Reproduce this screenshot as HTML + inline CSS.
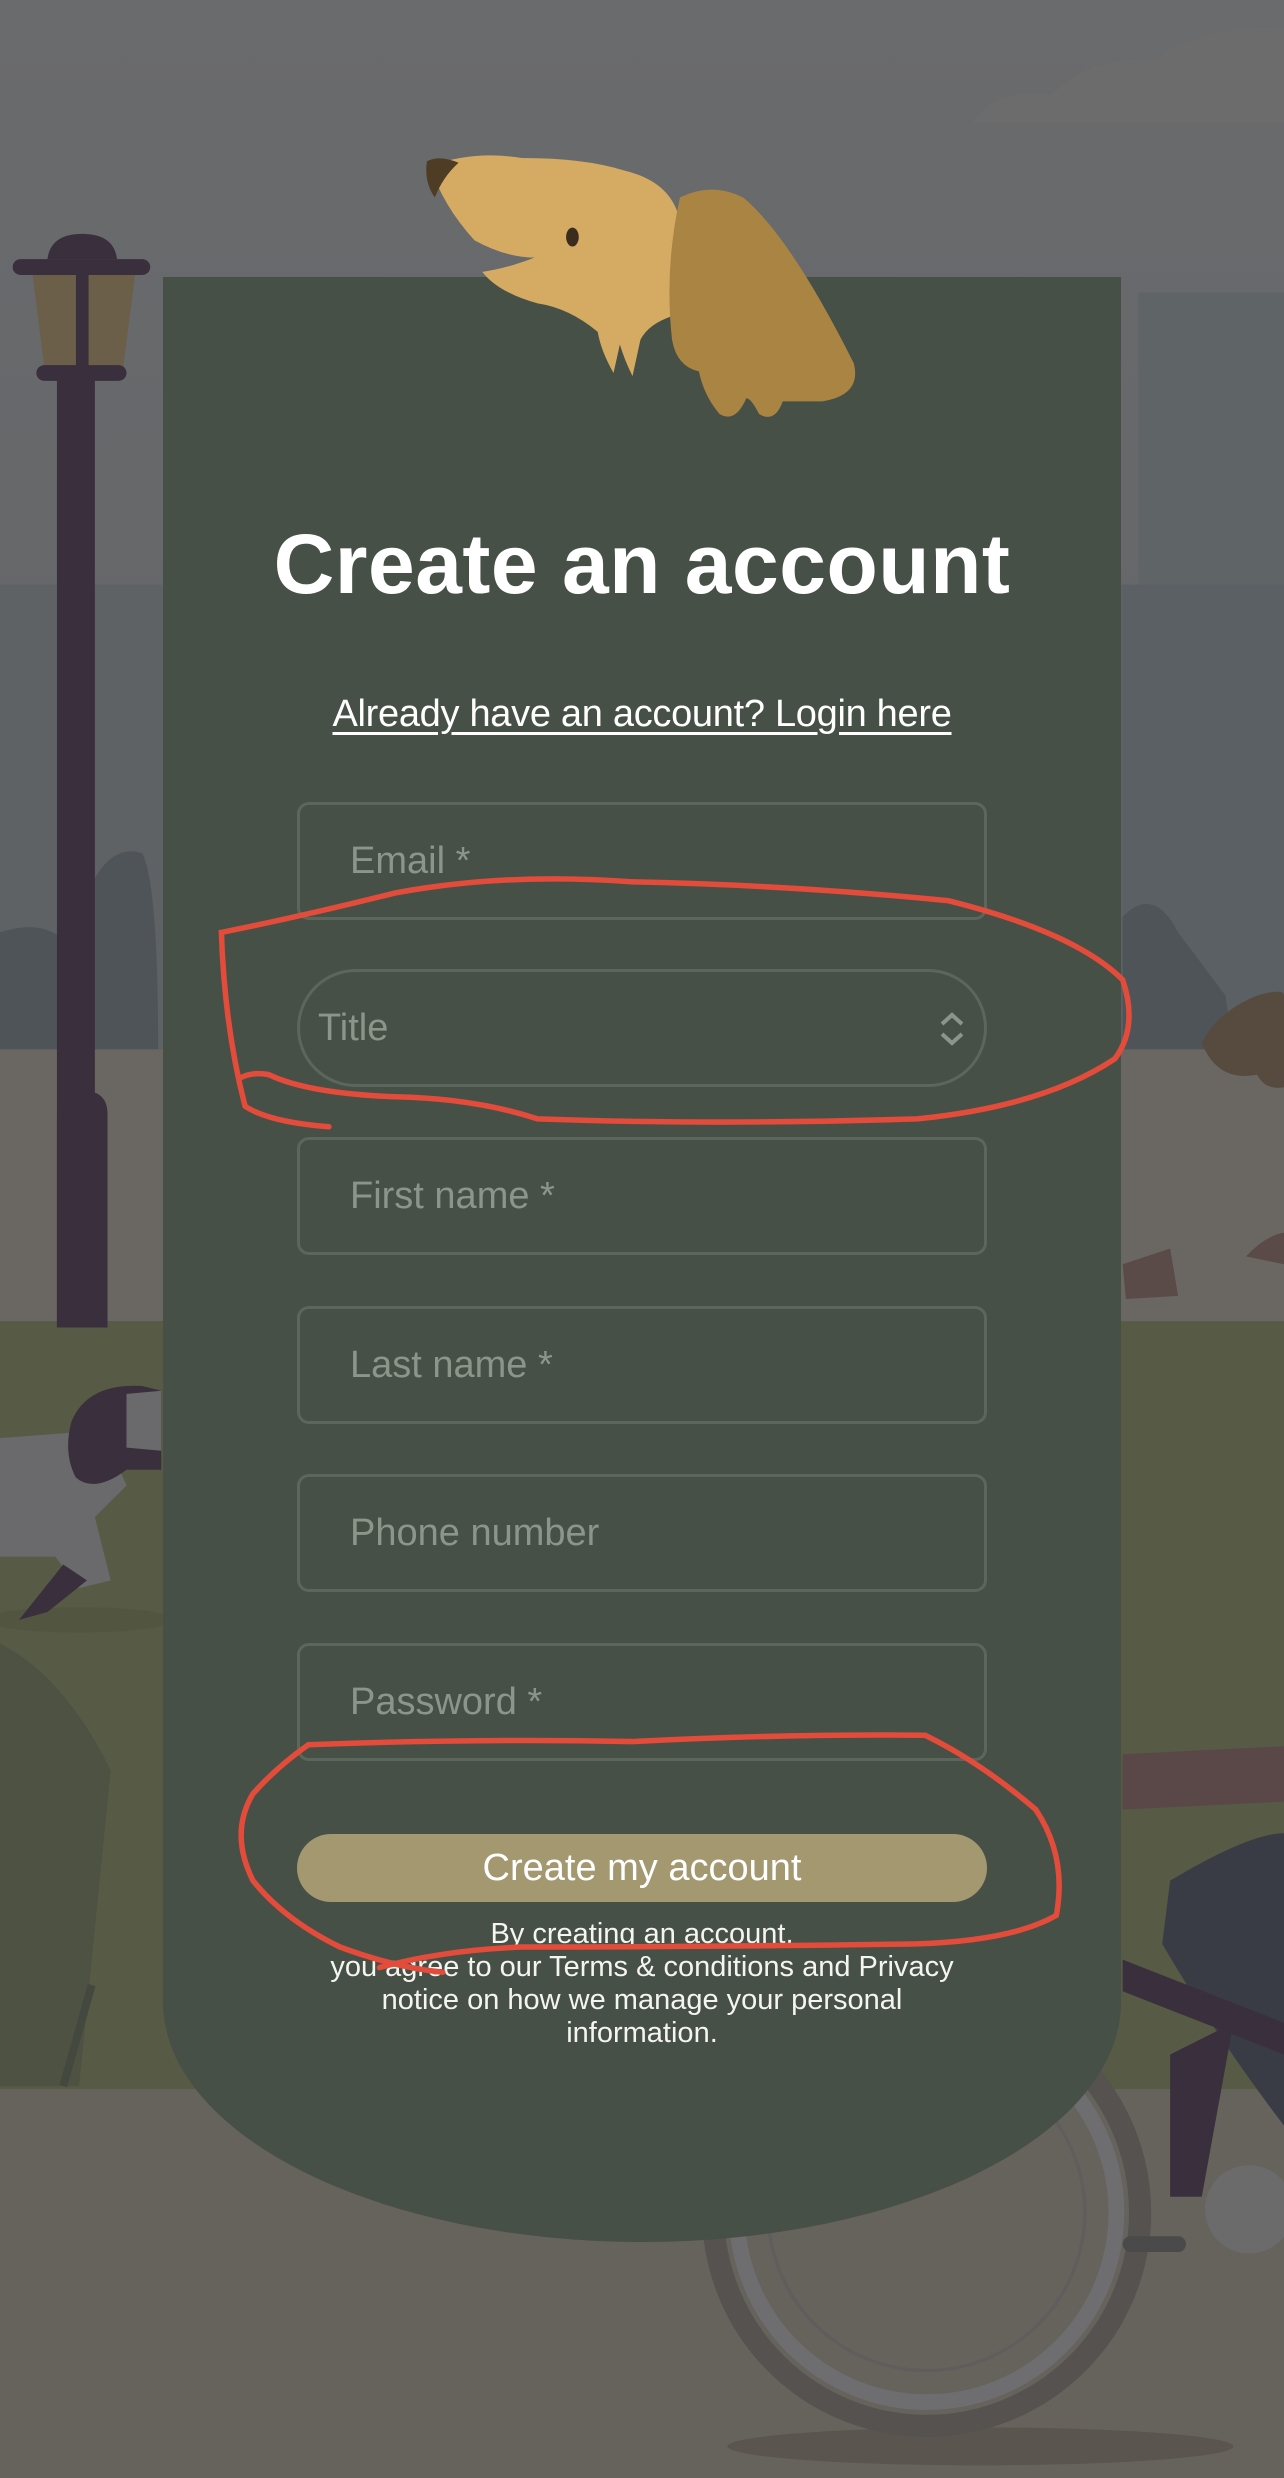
<!DOCTYPE html>
<html><head><meta charset="utf-8"><style>
*{margin:0;padding:0;box-sizing:border-box}
html,body{width:1284px;height:2478px;overflow:hidden;background:#67686a}
body{position:relative;font-family:"Liberation Sans",sans-serif}
svg.bg{position:absolute;left:0;top:0;width:1284px;height:2478px}
.card{position:absolute;left:163px;top:277px;width:958px;height:1965px;background:#465046;border-radius:0 0 479px 479px/0 0 240px 240px}
.t{position:absolute;color:#fff;text-align:center;left:0;width:1284px}
h1{position:absolute;left:0;width:1284px;top:516px;text-align:center;color:#fff;font-size:84px;font-weight:bold;letter-spacing:0.5px}
.link{top:693px;font-size:38px;font-weight:300;text-decoration:underline;text-underline-offset:6px;letter-spacing:-0.3px}
.in{position:absolute;left:297px;width:690px;height:118px;border:3px solid #5c665b;border-radius:12px;color:#8c958a;font-size:38px;padding-left:50px;line-height:112px}
.sel{border-radius:60px;padding-left:18px}
.btn{position:absolute;left:297px;top:1834px;width:690px;height:68px;background:#a39870;border-radius:34px;color:#fff;font-size:38px;text-align:center;line-height:68px;font-weight:300}
.small{top:1918px;font-size:29px;line-height:33px;font-weight:300;color:#f4f4f0}
svg.ov{position:absolute;left:0;top:0;width:1284px;height:2478px;pointer-events:none}
</style></head><body>
<svg class="bg" viewBox="0 0 812 1568" preserveAspectRatio="none">
<defs><linearGradient id="sky" x1="0" y1="0" x2="0" y2="1"><stop offset="0" stop-color="#6a6b6d"/><stop offset="1" stop-color="#626467"/></linearGradient></defs>
<rect width="812" height="700" fill="url(#sky)"/>
<path d="M615 78 Q630 55 665 60 Q690 35 730 38 Q760 15 812 18 V78Z" fill="#6c6c6d"/>
<rect x="0" y="370" width="812" height="300" fill="#5e6265"/>
<rect x="720" y="185" width="92" height="490" fill="#5f6467"/>
<rect x="710" y="370" width="102" height="300" fill="#5b6064"/>
<path d="M0 590 Q30 580 45 600 Q60 530 90 540 Q100 560 100 664 H0Z" fill="#4e5457"/>
<path d="M710 580 Q730 560 745 590 Q760 610 775 630 L780 664 H710Z" fill="#4e5457"/>
<rect x="0" y="664" width="812" height="172" fill="#6a6762"/>
<rect x="0" y="836" width="812" height="486" fill="#575a45"/>
<rect x="0" y="1322" width="812" height="246" fill="#66625c"/>
<ellipse cx="620" cy="1548" rx="160" ry="12" fill="#5a564f"/>
<path d="M0 1040 Q40 1060 70 1120 L50 1320 H0Z" fill="#4d5242"/>
<path d="M40 1320 L58 1256" stroke="#44493f" stroke-width="5"/>
<rect x="36" y="230" width="24" height="610" fill="#3a2f3c"/>
<path d="M36 705 Q36 690 52 690 Q68 690 68 705 V840 H36Z" fill="#3a2f3c"/>
<path d="M20 170 H86 L78 232 H28Z" fill="#6c5f4a"/>
<rect x="8" y="164" width="87" height="10" rx="5" fill="#3a2f3c"/>
<path d="M30 164 Q32 148 52 148 Q72 148 74 164Z" fill="#3a2f3c"/>
<rect x="23" y="231" width="57" height="10" rx="5" fill="#3a2f3c"/>
<rect x="48" y="172" width="8" height="62" fill="#3a2f3c"/>
<ellipse cx="50" cy="1025" rx="60" ry="8" fill="#52553f"/>
<path d="M0 910 L65 905 L80 940 L60 960 L70 1000 L50 1005 L35 985 L0 985Z" fill="#6a6a6c"/>
<path d="M12 1025 L40 990 L55 1000 L30 1020Z" fill="#3a2f3c"/>
<path d="M45 900 Q55 875 90 877 L102 880 V930 H80 Q60 945 48 935 Q40 920 45 900Z" fill="#3a2f3c"/>
<path d="M80 882 L102 880 V918 L80 916Z" fill="#6a6a6c"/>
<path d="M760 660 Q770 640 795 630 Q812 625 812 630 V688 Q800 690 795 680 Q770 685 760 660Z" fill="#574a3e"/>
<path d="M710 800 L740 790 L745 820 L712 822Z" fill="#5a4a48"/>
<path d="M788 795 Q800 782 812 780 V800Z" fill="#5a4a48"/>
<path d="M710 1110 L812 1105 V1140 L710 1145Z" fill="#594847"/>
<path d="M740 1190 Q790 1160 812 1160 V1345 Q770 1290 735 1230Z" fill="#393c44"/>
<path d="M710 1240 L812 1280 L812 1300 L710 1260Z" fill="#3a2f3c"/>
<path d="M740 1300 L780 1280 L760 1390 L740 1390Z" fill="#3a2f3c"/>
<circle cx="586" cy="1400" r="135" fill="none" stroke="#55524f" stroke-width="14"/>
<circle cx="586" cy="1400" r="120" fill="none" stroke="#6e6d70" stroke-width="10"/>
<circle cx="586" cy="1400" r="100" fill="none" stroke="#5f5e5c" stroke-width="2"/>
<circle cx="790" cy="1398" r="28" fill="#6b6b6c"/>
<rect x="710" y="1415" width="40" height="10" rx="5" fill="#4a4a4a"/>
</svg>
<div class="card"></div>
<svg class="bg" viewBox="0 0 812 1568" preserveAspectRatio="none">
<path d="M272 105 Q300 95 330 100 Q370 100 395 108 Q425 115 430 140 L425 200 Q410 205 405 215 L400 238 Q395 228 392 218 L388 236 Q380 222 378 210 Q360 195 340 192 Q315 185 305 172 Q320 170 338 163 Q320 163 300 152 Q280 130 272 105Z" fill="#d5ab63"/>
<path d="M270 102 Q278 98 290 103 Q280 112 275 125 Q268 115 270 102Z" fill="#4e3c25"/>
<ellipse cx="362" cy="150" rx="4" ry="6" fill="#3b2d1e"/>
<path d="M430 125 Q450 115 470 125 Q500 150 540 230 Q545 250 520 254 L495 254 Q490 268 480 262 Q475 252 472 252 Q465 268 455 262 Q445 250 442 235 Q428 232 425 215 Q420 170 430 125Z" fill="#a98443"/>
</svg>
<h1>Create an account</h1>
<div class="t link">Already have an account? Login here</div>
<div class="in" style="top:802px">Email *</div>
<div class="in sel" style="top:969px">Title
<svg style="position:absolute;right:18px;top:40px" width="28" height="34" viewBox="0 0 28 34"><path d="M4 12 L14 3 L24 12 M4 22 L14 31 L24 22" fill="none" stroke="#8c958a" stroke-width="4"/></svg></div>
<div class="in" style="top:1137px">First name *</div>
<div class="in" style="top:1306px">Last name *</div>
<div class="in" style="top:1474px">Phone number</div>
<div class="in" style="top:1643px">Password *</div>
<div class="btn">Create my account</div>
<div class="t small">By creating an account,<br>you agree to our Terms &amp; conditions and Privacy<br>notice on how we manage your personal<br>information.</div>
<svg class="ov" viewBox="0 0 812 1568" preserveAspectRatio="none">
<path d="M208 713 Q170 710 155 700 Q142 650 140 590 Q190 580 250 565 Q320 552 400 558 Q500 560 600 570 Q680 590 710 620 Q720 650 705 670 Q660 700 580 708 Q450 712 340 708 Q300 695 250 694 Q195 692 170 680 Q160 678 152 682" fill="none" stroke="#e34b3a" stroke-width="3.5" stroke-linecap="round"/>
<path d="M280 1248 Q250 1245 215 1232 Q180 1215 160 1190 Q145 1160 160 1135 Q175 1118 195 1104 Q300 1100 400 1102 Q500 1097 585 1098 Q620 1115 655 1145 Q675 1175 668 1212 Q640 1228 580 1230 Q450 1232 330 1232 Q280 1234 240 1245" fill="none" stroke="#e34b3a" stroke-width="3.5" stroke-linecap="round"/>
</svg>
</body></html>
